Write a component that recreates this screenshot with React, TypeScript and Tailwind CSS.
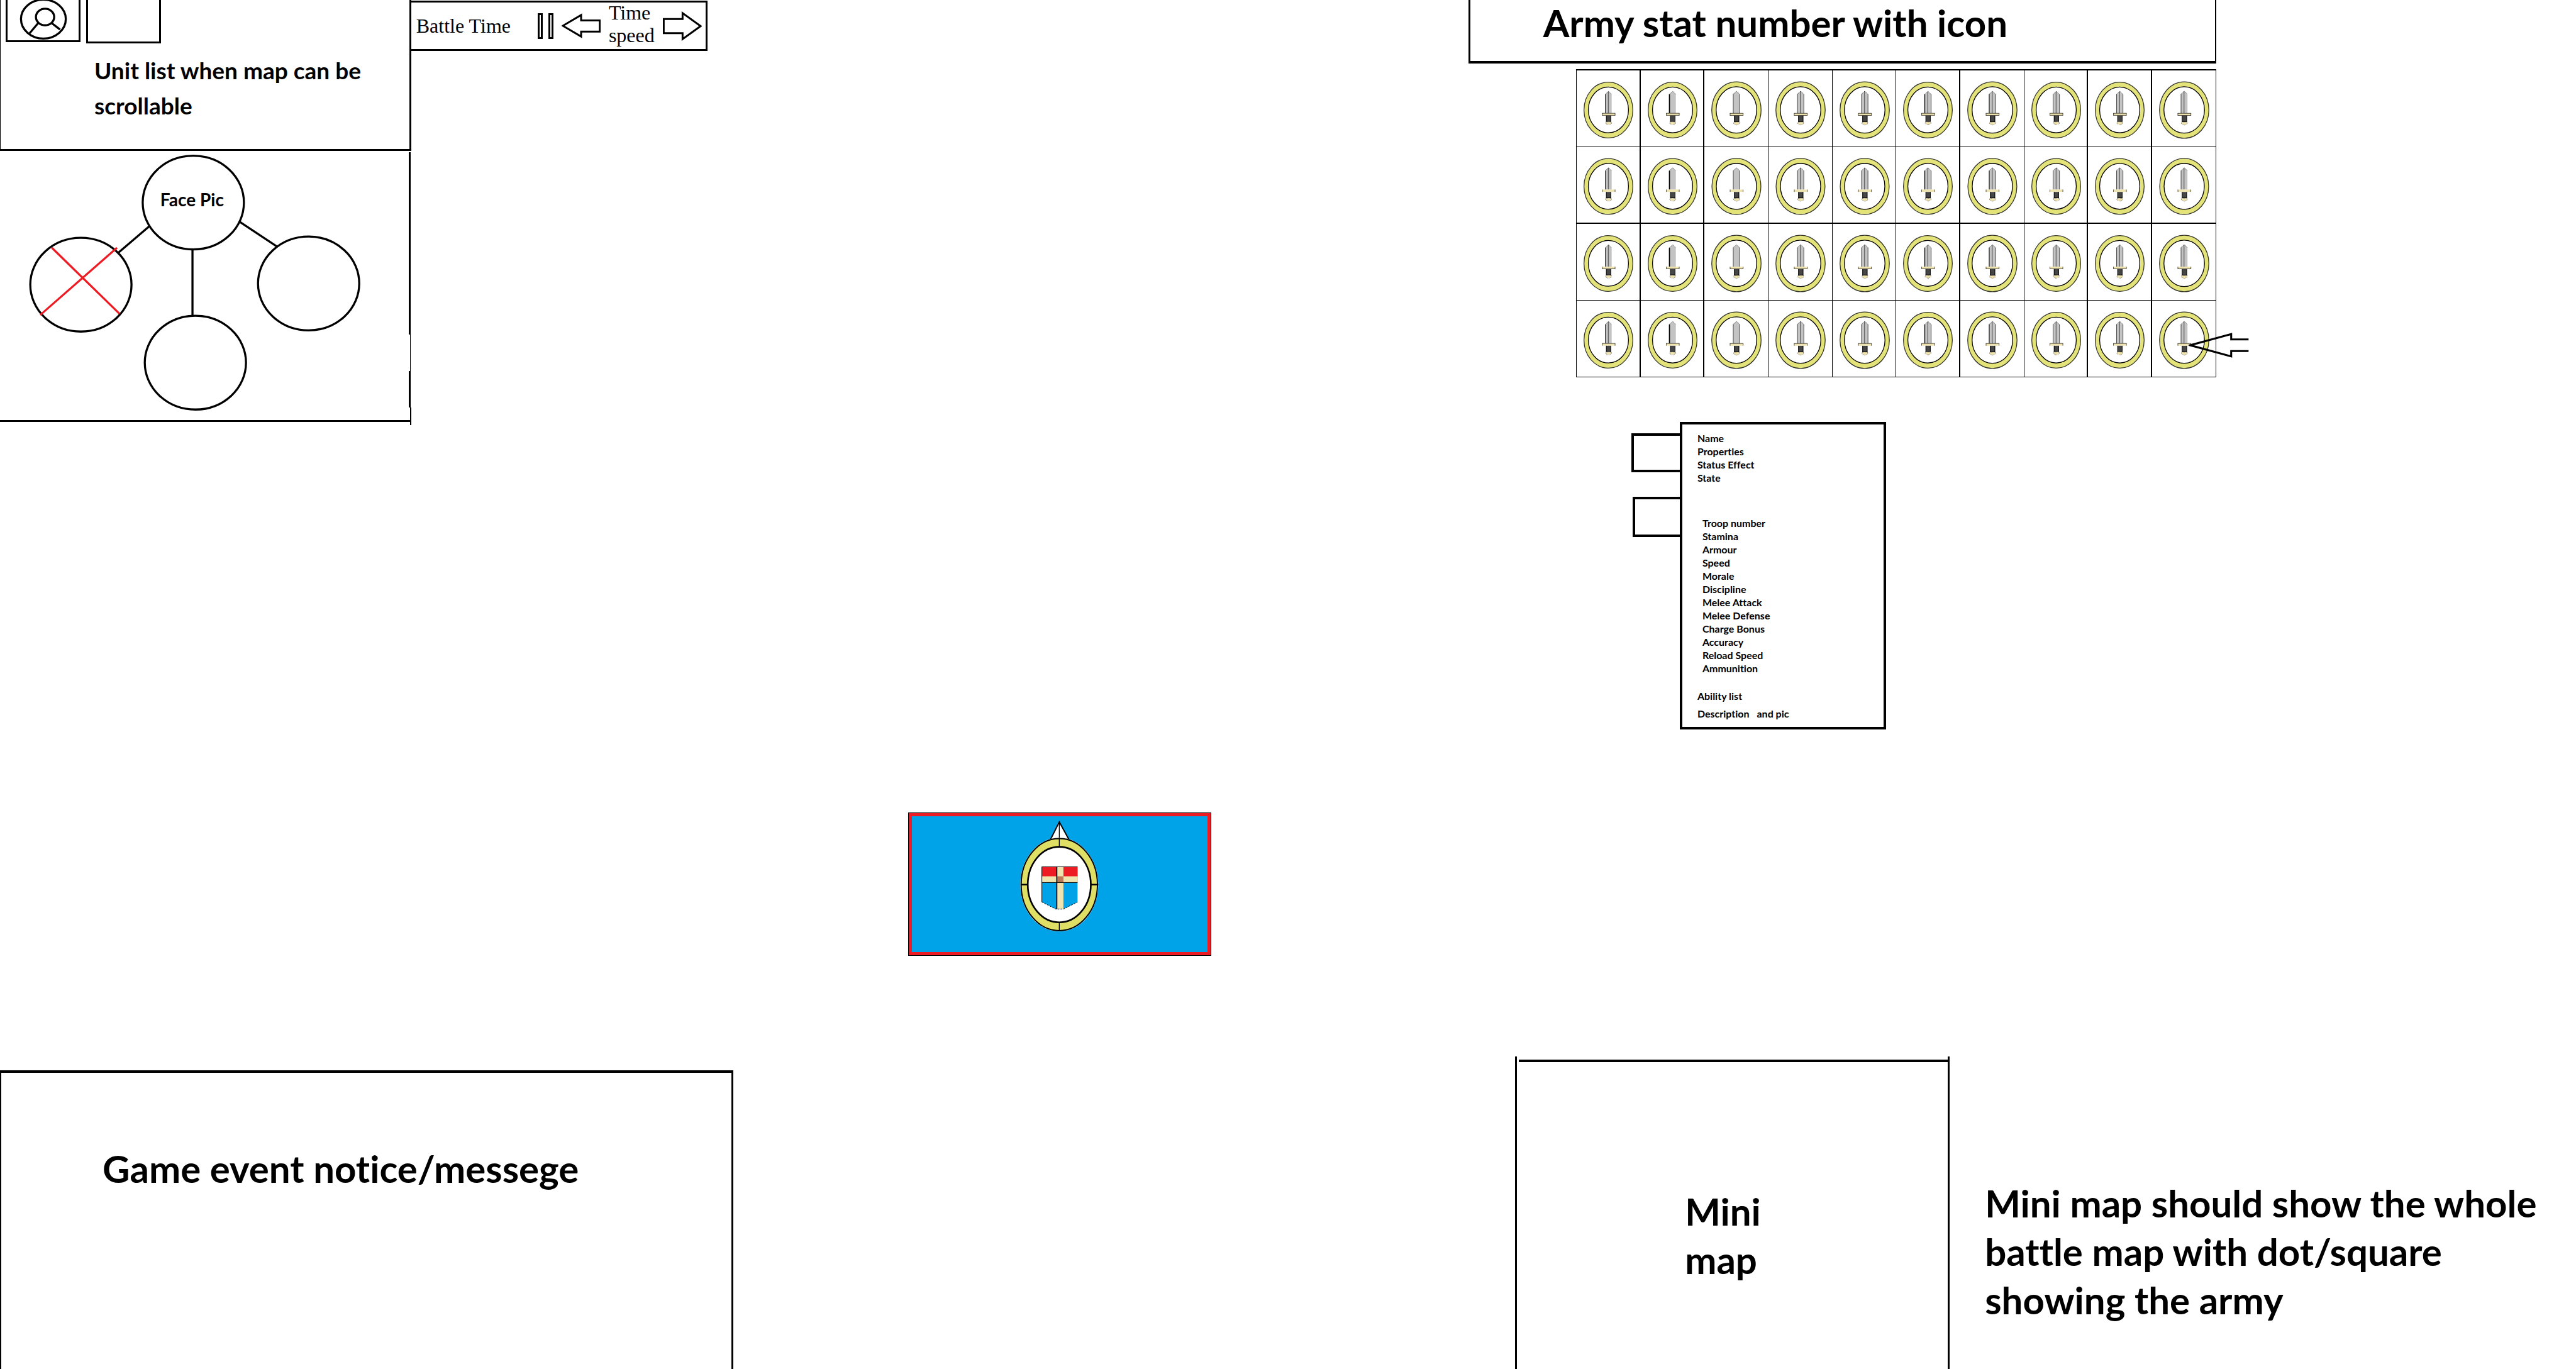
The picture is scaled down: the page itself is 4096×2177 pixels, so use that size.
import React from 'react';

const commanderFields = ['Name', 'Properties', 'Status Effect', 'State'];

const unitStats = [
  'Troop number',
  'Stamina',
  'Armour',
  'Speed',
  'Morale',
  'Discipline',
  'Melee Attack',
  'Melee Defense',
  'Charge Bonus',
  'Accuracy',
  'Reload Speed',
  'Ammunition',
];

type Blade = { left: number; center: boolean; right: boolean; edge: string };

const columns: Blade[] = [
  { left: 4, center: true, right: false, edge: 'border-r-2' },
  { left: 8, center: false, right: false, edge: 'border-r-2' },
  { left: 3, center: false, right: true, edge: 'border-r' },
  { left: 3, center: true, right: true, edge: 'border-r' },
  { left: 3, center: true, right: true, edge: 'border-r' },
  { left: 6, center: true, right: true, edge: 'border-r-2' },
  { left: 5, center: true, right: true, edge: 'border-r' },
  { left: 3, center: true, right: true, edge: 'border-r-2' },
  { left: 3, center: true, right: true, edge: 'border-r-2' },
  { left: 3, center: true, right: false, edge: 'border-r' },
];

const rows = [
  { guardTop: true, guardBottom: true, edge: 'border-b' },
  { guardTop: false, guardBottom: false, edge: 'border-b-2' },
  { guardTop: false, guardBottom: true, edge: 'border-b' },
  { guardTop: true, guardBottom: false, edge: 'border-b' },
];

function CommanderIcon() {
  return (
    <svg viewBox="0 0 114 97" className="h-16 w-[76px]" fill="none" stroke="#000" strokeWidth="5" aria-hidden="true">
      <ellipse cx="57" cy="46" rx="54" ry="47" />
      <ellipse cx="61" cy="41" rx="22" ry="20" />
      <path d="M45 55 L24 80 M76 55 L97 71" />
    </svg>
  );
}

function SwordMedallion({ blade, guardTop, guardBottom }: { blade: Blade; guardTop: boolean; guardBottom: boolean }) {
  return (
    <svg viewBox="0 0 462 555" className="h-full w-full" aria-hidden="true">
      <ellipse cx="234" cy="289" rx="180" ry="206" fill="#e4e37a" stroke="#33362c" strokeWidth="6" />
      <ellipse cx="234" cy="288" rx="148" ry="169" fill="#fff" stroke="#000" strokeWidth="6" />
      <path d="M210 312 V173 L235 151 L258 173 V312 Z" fill="#c3c3c3" />
      <path d="M210 173 L235 151 L258 173" fill="none" stroke="#000" strokeWidth="3" strokeDasharray="5 4" />
      <path d="M211 173 V312" stroke="#000" strokeWidth={blade.left} />
      {blade.center && <path d="M233 152 V312" stroke="#000" strokeWidth="3" />}
      {blade.right && <path d="M258 173 V312" stroke="#000" strokeWidth="3" />}
      <rect x="217" y="329" width="37" height="46" fill="#464646" />
      <path d="M219 329 V375 M252 329 V375 M217 373 H254" stroke="#000" strokeWidth="4" />
      <rect x="187" y="312" width="97" height="17" fill="#efe4b0" />
      <path d="M188 312 V329 M283 312 V329" stroke="#000" strokeWidth="3" />
      {guardTop && <path d="M187 313 H284" stroke="#000" strokeWidth="3" />}
      {guardBottom && <path d="M187 328 H284" stroke="#000" strokeWidth="3" />}
      <path d="M216 376 H255 L257 388 L235 399 L213 388 Z" fill="#efe4b0" stroke="#000" strokeWidth="3" strokeDasharray="4 6" />
    </svg>
  );
}

function CommandTree() {
  return (
    <svg viewBox="0 0 985 645" className="block h-auto w-full" fill="none" stroke="#000" strokeWidth="5" aria-hidden="true">
      <path d="M360 180 L285 244 M464 236 V397 M577 169 L669 230" />
      <ellipse cx="466" cy="123" rx="122" ry="113" />
      <ellipse cx="195" cy="321" rx="122" ry="113" />
      <ellipse cx="471" cy="509" rx="122" ry="113" />
      <ellipse cx="744" cy="318" rx="122" ry="113" />
      <path d="M125 232 L288 391 M282 232 L97 394" stroke="#ed1c24" />
    </svg>
  );
}

function FactionCrest() {
  return (
    <svg viewBox="0 0 194 271" className="h-[179px] w-32" aria-hidden="true">
      <path d="M96 3 L75 45 H119 Z" fill="#fff" stroke="#000" strokeWidth="3" />
      <path d="M96 3 V45" stroke="#000" strokeWidth="2" />
      <ellipse cx="96" cy="154" rx="94" ry="113" fill="#fff" />
      <ellipse cx="96" cy="154" rx="92" ry="111" fill="#dfdf66" stroke="#000" strokeWidth="3" />
      <ellipse cx="96" cy="154" rx="76" ry="91" fill="#fff" stroke="#000" strokeWidth="4" />
      <path d="M3 154 H21 M172 154 H190" stroke="#000" strokeWidth="4" />
      <path d="M96 43 V63 M96 246 V266" stroke="#000" strokeWidth="2" />
      <path d="M54 111 H140 V196 L106 213 H88 L54 196 Z" fill="#00a2e8" />
      <rect x="54" y="111" width="86" height="24" fill="#ed1c24" />
      <rect x="54" y="134" width="86" height="15" fill="#efe4b0" />
      <rect x="91" y="111" width="15" height="102" fill="#efe4b0" />
      <rect x="91" y="134" width="15" height="15" fill="#b97a57" />
      <path d="M54 111 H140 M54 149 H140 M54 111 V196" stroke="#000" strokeWidth="1.5" fill="none" />
      <path d="M90 111 V213" stroke="#000" strokeWidth="2.5" />
      <path d="M54 196 L88 213 H106 L140 196" stroke="#000" strokeWidth="1.5" strokeDasharray="4 3" fill="none" />
    </svg>
  );
}

function CommanderPanel() {
  return (
    <aside className="flex w-[15.96%] flex-col">
      <div className="border-r-3 border-b-3 border-l border-black pb-[41px]">
        <div className="flex items-start gap-[9px] pl-2">
          <button aria-label="Commander" className="flex h-[67px] w-[119px] justify-center border-x-3 border-b-3 border-black">
            <CommanderIcon />
          </button>
          <button aria-label="Empty slot" className="h-[69px] w-[119px] border-x-3 border-b-3 border-black" />
        </div>
        <h2 className="mt-[15px] pl-[149px] text-[37px] leading-14 font-bold whitespace-nowrap">
          Unit list when map can be
          <br />
          scrollable
        </h2>
      </div>
      <div className="flex border-b-3 border-black">
        <div className="relative flex-1 pt-px pb-0.5">
          <CommandTree />
          <span className="absolute top-[18%] left-[47%] -translate-x-1/2 -translate-y-1/2 text-[28px] leading-8 font-bold whitespace-nowrap">
            Face Pic
          </span>
        </div>
        <div className="-mb-2 flex w-1 flex-col items-end pt-0.5">
          <div className="mr-px w-[3px] grow-[9] bg-black" />
          <div className="mr-px w-[3px] grow bg-black" />
          <div className="mr-px w-px grow-[2] bg-black" />
          <div className="mr-px w-[3px] grow-[2] bg-black" />
          <div className="h-7 w-0.5 bg-black" />
        </div>
      </div>
    </aside>
  );
}

function TimeBar() {
  return (
    <div className="mt-px flex h-20 w-[11.5%] items-center border-y-3 border-r-3 border-black pr-1.5 pl-2 font-['Liberation_Serif',serif] text-[32px] leading-9 whitespace-nowrap">
      <span>Battle Time</span>
      <div className="ml-auto flex items-center gap-[13px]">
        <button aria-label="Pause" className="flex gap-[9px]">
          <span className="h-[41px] w-2 border-3 border-black" />
          <span className="h-[41px] w-2 border-3 border-black" />
        </button>
        <button aria-label="Slower">
          <svg viewBox="0 0 94 60" className="h-10 w-[62px]" fill="none" stroke="#000" strokeWidth="4.5" aria-hidden="true">
            <path d="M3 30 L47 4 V17 H92 V44 H47 V56 Z" />
          </svg>
        </button>
        <span className="pb-1.5">
          Time
          <br />
          speed
        </span>
        <button aria-label="Faster">
          <svg viewBox="0 0 93 70" className="h-[47px] w-[62px]" fill="none" stroke="#000" strokeWidth="4.5" aria-hidden="true">
            <path d="M90 35 L47 4 V18 H2 V52 H47 V66 Z" />
          </svg>
        </button>
      </div>
    </div>
  );
}

function UnitGrid() {
  return (
    <div className="relative mt-[9px] w-[85.6%] self-end">
      <div className="grid grid-cols-10 border-t-2 border-l border-black">
        {rows.map((row, r) =>
          columns.map((blade, c) => (
            <button
              key={`${r}-${c}`}
              aria-label={`Unit ${r * 10 + c + 1}`}
              className={`h-[122px] border-black ${row.edge} ${blade.edge}`}
            >
              <SwordMedallion blade={blade} guardTop={row.guardTop} guardBottom={row.guardBottom} />
            </button>
          )),
        )}
      </div>
      <svg
        viewBox="0 0 146 60"
        className="absolute -right-[52px] bottom-[31px] h-10 w-24"
        fill="none"
        stroke="#000"
        strokeWidth="4.7"
        aria-hidden="true"
      >
        <path d="M145 16 H103 V3 L4 30 L103 57 V44 H145" />
      </svg>
    </div>
  );
}

function UnitCard() {
  return (
    <div className="mt-[71px] ml-[21.8%] flex w-[34.1%] items-start text-[16px] leading-[21px] font-bold whitespace-nowrap">
      <div className="flex w-[77px] shrink-0 flex-col items-end gap-[39px] pt-[18px]">
        <button aria-label="First tab" className="h-[62px] w-full border-y-4 border-l-4 border-black" />
        <button aria-label="Second tab" className="h-16 w-[75px] border-y-4 border-l-4 border-black" />
      </div>
      <div className="flex-1 border-4 border-black px-6 py-[11px]">
        <ul>
          {commanderFields.map((field) => (
            <li key={field}>{field}</li>
          ))}
        </ul>
        <ul className="mt-[51px] pl-2">
          {unitStats.map((stat) => (
            <li key={stat}>{stat}</li>
          ))}
        </ul>
        <p className="mt-[23px]">Ability list</p>
        <p className="mt-[7px] flex gap-3">
          <span>Description</span>
          <span>and pic</span>
        </p>
      </div>
    </div>
  );
}

export default function App() {
  return (
    <main className="flex min-h-screen flex-col bg-white font-['Lato',sans-serif] text-black [font-variant-ligatures:none]">
      <div className="flex items-start">
        <CommanderPanel />
        <TimeBar />
        <section className="ml-[29.54%] flex w-[29.03%] flex-col">
          <header className="border-r-2 border-b-[4px] border-l-3 border-black pb-[25px] pl-[116px]">
            <h1 className="text-[60px] leading-[72px] font-bold whitespace-nowrap">Army stat number with icon</h1>
          </header>
          <UnitGrid />
          <UnitCard />
        </section>
      </div>

      <div className="flex flex-1 items-start pt-[133px] pl-[35.29%]">
        <button
          aria-label="Selected army"
          className="flex h-[226px] basis-[18.1%] justify-center border-5 border-[#ed1c24] bg-[#00a2e8] pt-[7px] outline-1 outline-black"
        >
          <FactionCrest />
        </button>
      </div>

      <div className="flex text-[60px] leading-[77px] font-bold">
        <section className="mt-[22px] w-[28.46%] border-t-4 border-r-3 border-l-2 border-black pt-[114px] pl-[161px]">
          <h2 className="whitespace-nowrap">Game event notice/messege</h2>
        </section>
        <section className="ml-[30.35%] flex w-[16.88%] flex-col border-x-3 border-black pt-[5px]">
          <div className="ml-[3px] border-t-4 border-black" />
          <h2 className="mt-[199px] ml-[39%]">
            Mini
            <br />
            map
          </h2>
        </section>
        <p className="pt-[195px] pb-[71px] pl-[56px] whitespace-nowrap">
          Mini map should show the whole
          <br />
          battle map with dot/square
          <br />
          showing the army
        </p>
      </div>
    </main>
  );
}
